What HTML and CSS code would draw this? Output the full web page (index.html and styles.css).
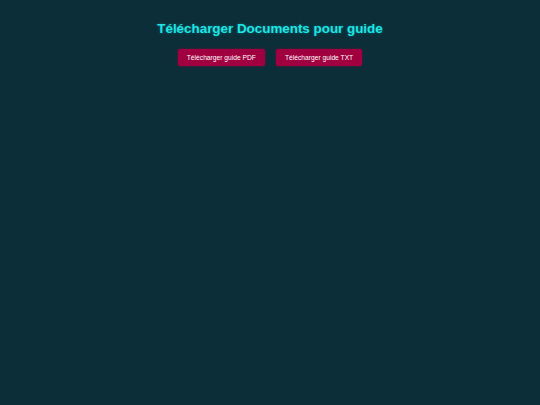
FILE: index.html
```html
<!DOCTYPE html>
<html lang="fr">
<head>
<meta charset="utf-8">
<title>Télécharger Documents pour guide</title>
<link rel="stylesheet" href="styles.css">
</head>
<body>
<main class="page">
  <h1 class="title">Télécharger Documents pour guide</h1>
  <div class="actions">
    <button class="btn">Télécharger guide PDF</button>
    <button class="btn">Télécharger guide TXT</button>
  </div>
</main>
</body>
</html>
```

FILE: styles.css
```css
html, body {
  margin: 0;
  padding: 0;
  background: #0b2e39;
  height: 100%;
}
body {
  font-family: "Liberation Sans", Arial, sans-serif;
}
.page {
  display: flex;
  flex-direction: column;
  align-items: center;
  padding-top: 20px;
}
.title {
  margin: 0;
  color: #1ee6e6;
  font-size: 13.4px;
  font-weight: bold;
  line-height: 17px;
  text-shadow: 0 0 3px rgba(30, 230, 230, 0.35);
}
.actions {
  display: flex;
  gap: 11px;
  margin-top: 12px;
}
.btn {
  background: #a0003f;
  color: #ffffff;
  border: none;
  border-radius: 2px;
  font-family: "Liberation Sans", Arial, sans-serif;
  font-size: 6.7px;
  height: 17px;
  padding: 0 9px;
  box-shadow: 0 0 3px rgba(160, 0, 63, 0.6);
}
```
